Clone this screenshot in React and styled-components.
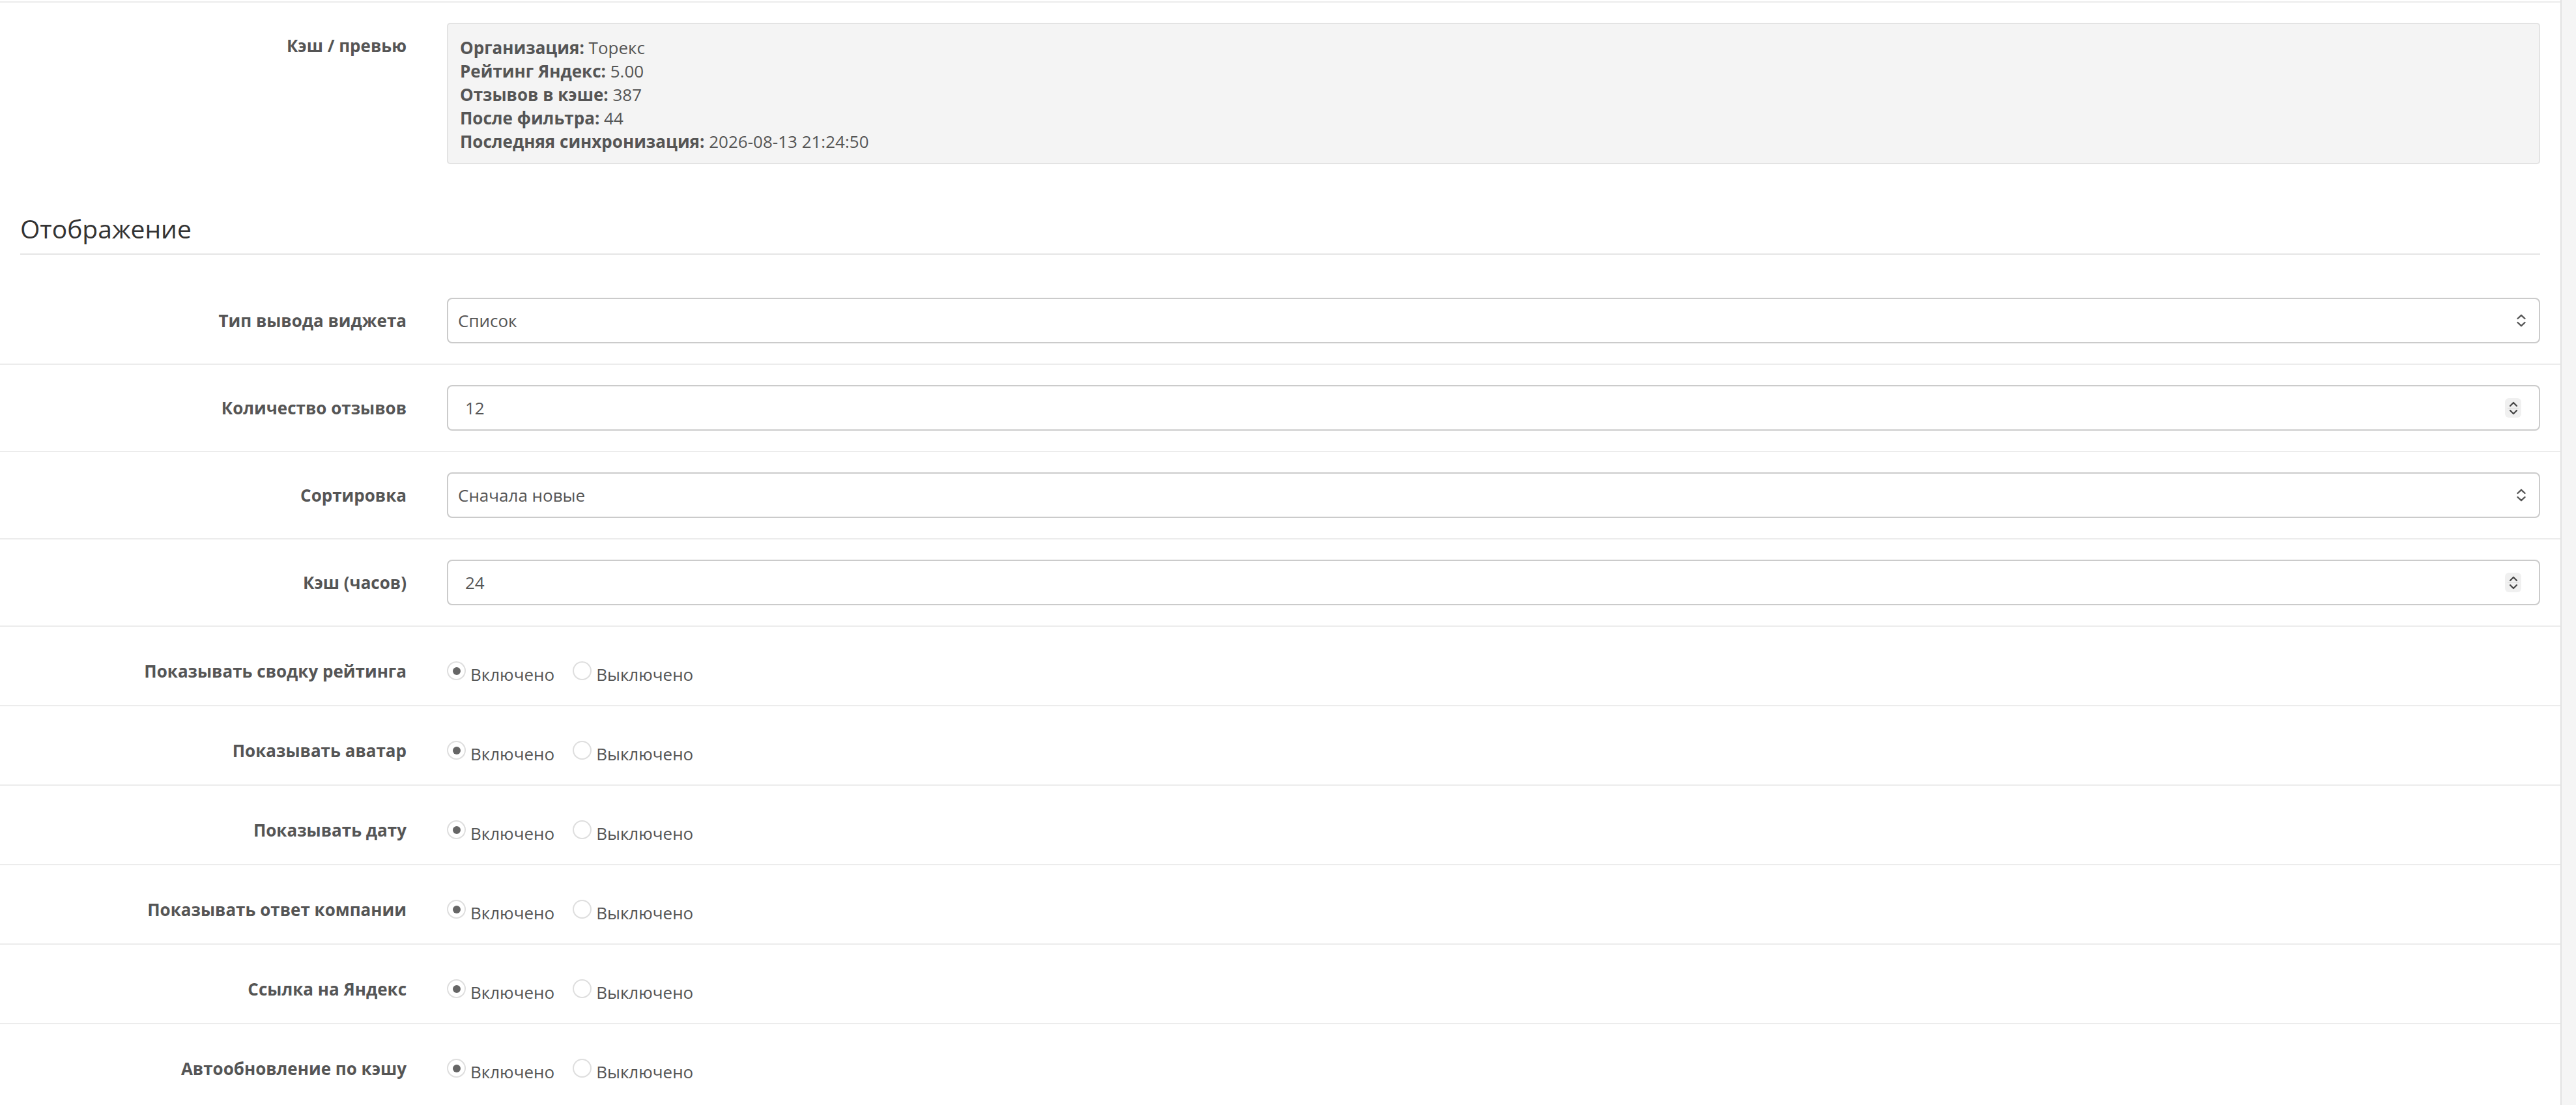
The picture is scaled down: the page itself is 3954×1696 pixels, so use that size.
import React from 'react'
import styled, { createGlobalStyle } from 'styled-components'

const GlobalStyle = createGlobalStyle`
  html, body {
    margin: 0;
    padding: 0;
    background: #f5f5f5;
  }
  body {
    font-family: "Open Sans", "Liberation Sans", sans-serif;
    color: #555;
  }
`

const Page = styled.div`
  min-height: 100vh;
  margin-right: 22px;
  padding-top: 2px;
  background: #fff;
  border-right: 2px solid #e2e2e2;
  box-sizing: border-box;
`

const Legend = styled.h3`
  margin: 0 31px 33px;
  padding: 39px 0 10px;
  font-size: 39px;
  line-height: 57px;
  font-weight: 400;
  color: #333;
  border-bottom: 2px solid #e5e5e5;
`

// toggle rows sit a little lower inside a shorter box
const Row = styled.div`
  display: grid;
  grid-template-columns: 655px 1fr;
  align-items: start;
  padding: ${p => (p.$toggle ? '33px 0 29px' : '31px 0')};
  border-top: 2px solid #ececec;

  ${Legend} + & {
    border-top-color: transparent;
  }
`

const Label = styled.label`
  padding: ${p => p.$top}px 31px 0;
  text-align: right;
  font-size: 26px;
  line-height: 36px;
  font-weight: 700;
  color: #555;
`

const Field = styled.div`
  padding: 0 31px;
  min-width: 0;
`

const Well = styled.div`
  padding: 18px 18px 15px;
  background: #f4f4f4;
  border: 2px solid #e3e3e3;
  border-radius: 5px;
  font-size: 26px;
  line-height: 36px;
  color: #555;

  b {
    font-weight: 700;
  }
`

const Control = styled.div`
  display: flex;
  align-items: center;
  justify-content: space-between;
  height: 70px;
  box-sizing: border-box;
  padding: 0 ${p => (p.$number ? 27 : 19)}px 0 ${p => (p.$number ? 26 : 15)}px;
  border: 2px solid #cbcbcb;
  border-radius: 8px;
  background: #fff;
  font-size: 26px;
  line-height: 36px;
  color: #555;
`

const Spinner = styled.div`
  display: flex;
  flex-direction: column;
  align-items: center;
  justify-content: center;
  width: 25px;
  height: 30px;
  border-radius: 6px;
  background: #f0f0f0;
`

const SpinDivider = styled.span`
  width: 17px;
  height: 1px;
  margin: 1px 0;
  background: #dcdcdc;
`

const RadioGroup = styled.div`
  display: flex;
  gap: 28px;
  padding-top: 22px;
  font-size: 26px;
  line-height: 36px;
  color: #555;
`

const RadioOption = styled.label`
  display: flex;
  align-items: flex-start;
  gap: 7px;
`

const RadioDot = styled.span`
  display: flex;
  align-items: center;
  justify-content: center;
  width: 29px;
  height: 29px;
  margin-top: -2px;
  box-sizing: border-box;
  border: 2px solid #dedede;
  border-radius: 50%;
  background: #fff;

  &::after {
    content: '';
    width: 12px;
    height: 12px;
    border-radius: 50%;
    background: ${p => (p.$checked ? '#666' : 'transparent')};
  }
`

const SelectArrows = () => (
  <svg width="16" height="22" viewBox="0 0 16 22" fill="none" stroke="#555" strokeWidth="2.4" strokeLinecap="round" strokeLinejoin="round">
    <path d="M2.5 8 L8 2.8 L13.5 8" />
    <path d="M2.5 14 L8 19.2 L13.5 14" />
  </svg>
)

const Chevron = ({ down }) => (
  <svg width="14" height="9" viewBox="0 0 14 9" fill="none" stroke="#444" strokeWidth="2.2" strokeLinecap="round" strokeLinejoin="round">
    <path d={down ? 'M2 2 L7 7 L12 2' : 'M2 7 L7 2 L12 7'} />
  </svg>
)

const Select = ({ value }) => (
  <Control>
    <span>{value}</span>
    <SelectArrows />
  </Control>
)

const NumberInput = ({ value }) => (
  <Control $number>
    <span>{value}</span>
    <Spinner>
      <Chevron />
      <SpinDivider />
      <Chevron down />
    </Spinner>
  </Control>
)

const Toggle = ({ on = true }) => (
  <RadioGroup>
    <RadioOption>
      <RadioDot $checked={on} />
      Включено
    </RadioOption>
    <RadioOption>
      <RadioDot $checked={!on} />
      Выключено
    </RadioOption>
  </RadioGroup>
)

const cacheInfo = [
  ['Организация:', 'Торекс'],
  ['Рейтинг Яндекс:', '5.00'],
  ['Отзывов в кэше:', '387'],
  ['После фильтра:', '44'],
  ['Последняя синхронизация:', '2026-08-13 21:24:50']
]

const toggles = [
  'Показывать сводку рейтинга',
  'Показывать аватар',
  'Показывать дату',
  'Показывать ответ компании',
  'Ссылка на Яндекс',
  'Автообновление по кэшу'
]

const App = () => (
  <>
    <GlobalStyle />
    <Page>
      <Row>
        <Label $top={17}>Кэш / превью</Label>
        <Field>
          <Well>
            {cacheInfo.map(([k, v]) => (
              <div key={k}>
                <b>{k}</b> {v}
              </div>
            ))}
          </Well>
        </Field>
      </Row>

      <Legend>Отображение</Legend>

      <Row>
        <Label $top={17}>Тип вывода виджета</Label>
        <Field>
          <Select value="Список" />
        </Field>
      </Row>
      <Row>
        <Label $top={17}>Количество отзывов</Label>
        <Field>
          <NumberInput value="12" />
        </Field>
      </Row>
      <Row>
        <Label $top={17}>Сортировка</Label>
        <Field>
          <Select value="Сначала новые" />
        </Field>
      </Row>
      <Row>
        <Label $top={17}>Кэш (часов)</Label>
        <Field>
          <NumberInput value="24" />
        </Field>
      </Row>

      {toggles.map(name => (
        <Row key={name} $toggle>
          <Label $top={17}>{name}</Label>
          <Field>
            <Toggle />
          </Field>
        </Row>
      ))}
    </Page>
  </>
)

export default App
